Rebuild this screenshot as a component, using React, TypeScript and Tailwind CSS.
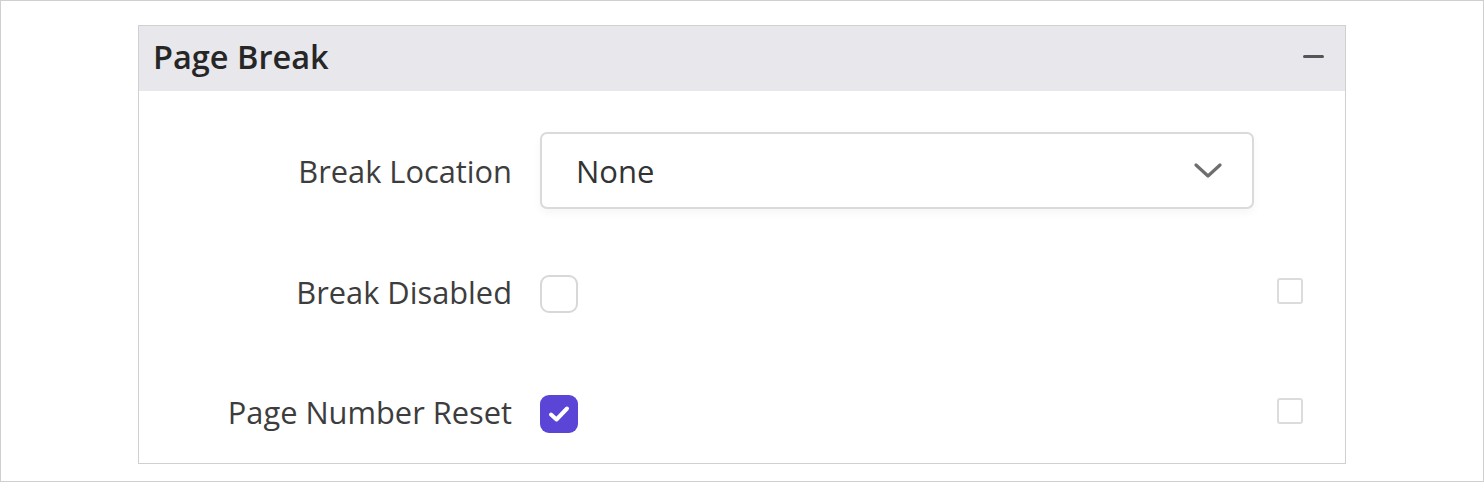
import React, { useState } from 'react';

const Row: React.FC<{ label: string; children: React.ReactNode; className?: string; labelClass?: string }> = ({ label, children, className, labelClass }) => (
    <div className={`flex items-center ${className ?? ''}`}>
        <div className={`w-[373px] shrink-0 text-right text-[30.8px] leading-none text-[#3d3d3d] ${labelClass ?? 'mb-[4px]'}`}>{label}</div>
        <div className="ml-[28px] flex flex-1 items-center">{children}</div>
    </div>
);

const SmallBox = () => (
    <div className="mb-[6px] mr-[42px] h-[26px] w-[26px] rounded-[3px] border-2 border-[#dcdcdc] bg-white" />
);

export default function App() {
    const [disabled, setDisabled] = useState(false);
    const [reset, setReset] = useState(true);

    return (
        <div className="h-[482px] w-[1484px] border border-[#cfcfcf] bg-white pl-[137px] pt-[24px] font-['Open_Sans',sans-serif]">
            <div className="w-[1208px] border border-[#d0d0d0] bg-white">
                {/* Header */}
                <div className="flex h-[65px] items-center justify-between bg-[#e8e7ec] pl-[14px] pr-[21px]">
                    <h2 className="mb-[3px] text-[32.5px] font-semibold leading-none text-[#262626]">Page Break</h2>
                    <div className="mb-[4px] h-[3px] w-[21px] rounded-full bg-[#555]" />
                </div>

                {/* Body */}
                <div className="pt-[41px] pb-[30px]">
                    <Row label="Break Location" labelClass="mt-[2px]">
                        <button className="flex h-[77px] w-[714px] items-center justify-between rounded-[7px] border-2 border-[#dadada] bg-white pl-[34px] pr-[30px] shadow-[0_4px_8px_rgba(0,0,0,0.04)]">
                            <span className="mt-[2px] text-[31px] leading-none text-[#333]">None</span>
                            <svg width="28" height="16" viewBox="0 0 28 16" fill="none">
                                <path d="M2 2 L14 13 L26 2" stroke="#6e6e6e" strokeWidth="3.2" strokeLinecap="round" strokeLinejoin="round" />
                            </svg>
                        </button>
                    </Row>

                    <Row label="Break Disabled" className="mt-[66px]">
                        <div className="flex flex-1 items-center justify-between">
                            <button
                                onClick={() => setDisabled(!disabled)}
                                className="h-[38px] w-[38px] rounded-[9px] border-2 border-[#d8d8d8] bg-white"
                            />
                            <SmallBox />
                        </div>
                    </Row>

                    <Row label="Page Number Reset" className="mt-[82px]">
                        <div className="flex flex-1 items-center justify-between">
                            <button
                                onClick={() => setReset(!reset)}
                                className="flex h-[38px] w-[38px] items-center justify-center rounded-[9px] bg-[#5a45d6]"
                            >
                                {reset && (
                                    <svg width="22" height="18" viewBox="0 0 22 18" fill="none">
                                        <path d="M3 9.5 L8.5 14.5 L19 3.5" stroke="#fff" strokeWidth="4" strokeLinecap="round" strokeLinejoin="round" />
                                    </svg>
                                )}
                            </button>
                            <SmallBox />
                        </div>
                    </Row>
                </div>
            </div>
        </div>
    );
}
